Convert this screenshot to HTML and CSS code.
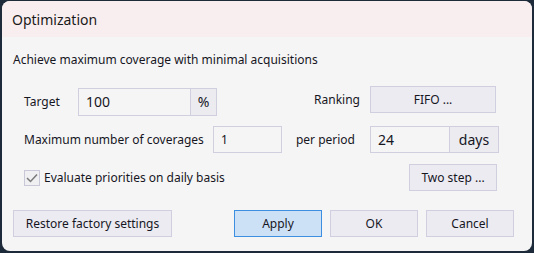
FILE: index.html
```html
<!DOCTYPE html>
<html lang="en">
<head>
    <meta charset="UTF-8">
    <title>Optimization</title>
    <link rel="stylesheet" href="styles.css">
</head>
<body>
    <div class="dialog">
        <div class="title-bar">Optimization</div>
        <div class="content">
            <p class="intro">Achieve maximum coverage with minimal acquisitions</p>

            <div class="row row-target">
                <span class="label label-target">Target</span>
                <div class="field">
                    <span class="input input-target">100</span>
                    <span class="addon addon-pct">%</span>
                </div>
                <span class="label label-right label-ranking">Ranking</span>
                <button class="btn btn-fifo">FIFO ...</button>
            </div>

            <div class="row row-coverages">
                <span class="label label-max">Maximum number of coverages</span>
                <span class="input input-small">1</span>
                <span class="label label-right label-period">per period</span>
                <div class="field">
                    <span class="input input-period">24</span>
                    <span class="addon addon-days">days</span>
                </div>
            </div>

            <div class="row row-check">
                <label class="check">
                    <span class="check-box">
                        <svg width="12" height="10" viewBox="0 0 12 10">
                            <path d="M1 5 L4.5 8.5 L11 1.5" fill="none" stroke="#7a7a7a" stroke-width="1.5"/>
                        </svg>
                    </span>
                    Evaluate priorities on daily basis
                </label>
                <button class="btn btn-two">Two step ...</button>
            </div>

            <div class="row footer">
                <button class="btn btn-restore">Restore factory settings</button>
                <div class="footer-actions">
                    <button class="btn btn-primary">Apply</button>
                    <button class="btn">OK</button>
                    <button class="btn">Cancel</button>
                </div>
            </div>
        </div>
    </div>
</body>
</html>
```

FILE: styles.css
```css
body {
    margin: 0;
    padding: 1px 2px 2px 2px;
    background-color: #1d2a3a;
    font-family: 'Noto Sans', 'Open Sans', sans-serif;
    font-size: 12px;
    color: #16161f;
}
.dialog {
    width: 530px;
    height: 250px;
    background-color: #f5f5f5;
    border-radius: 8px;
    overflow: hidden;
    box-sizing: border-box;
}
.title-bar {
    height: 36px;
    line-height: 37px;
    padding-left: 10px;
    background-color: #f9eeef;
    font-size: 14px;
    color: #1a1a1a;
}
.content {
    padding: 15px 0 0 11px;
}
.intro {
    margin: 0;
    line-height: 16px;
}
.row {
    display: flex;
    align-items: center;
}
.row-target {
    margin-top: 18px;
    height: 30px;
    padding-left: 11px;
}
.row-coverages {
    margin-top: 10px;
    height: 27px;
    padding-left: 11px;
}
.row-check {
    margin-top: 11px;
    height: 27px;
    padding-left: 11px;
}
.footer {
    margin-top: 19px;
    height: 27px;
}
.label-target {
    width: 54px;
}
.label-max {
    width: 189px;
}
.label-right {
    text-align: right;
}
.label-ranking {
    width: 143px;
    margin-right: 10px;
    align-self: flex-start;
    line-height: 27px;
}
.label-period {
    width: 73px;
    margin-right: 15px;
}
.field {
    display: flex;
    align-self: flex-end;
}
.row-coverages .field {
    align-self: center;
}
.input {
    box-sizing: border-box;
    height: 28px;
    line-height: 26px;
    border: 1px solid #cfcfe0;
    background-color: #f5f5f5;
    padding-left: 7px;
    font-size: 14px;
}
.input-target {
    width: 113px;
}
.input-small {
    width: 69px;
    height: 27px;
    line-height: 25px;
    font-size: 12px;
}
.input-period {
    width: 80px;
    height: 27px;
    line-height: 25px;
}
.addon {
    box-sizing: border-box;
    height: 28px;
    line-height: 26px;
    border: 1px solid #cfcfe0;
    border-left: none;
    background-color: #ebebf0;
    text-align: center;
    font-size: 14px;
}
.addon-pct {
    width: 26px;
}
.addon-days {
    width: 49px;
    height: 27px;
    line-height: 25px;
}
.btn {
    box-sizing: border-box;
    height: 27px;
    width: 88px;
    border: 1px solid #cfcfe0;
    background-color: #ecebf2;
    font-family: inherit;
    font-size: 12px;
    color: #16161f;
    padding: 0;
}
.btn-fifo {
    width: 126px;
    align-self: flex-start;
}
.check {
    display: flex;
    align-items: center;
    gap: 4px;
    width: 385px;
}
.check-box {
    box-sizing: border-box;
    width: 16px;
    height: 16px;
    border: 1px solid #c8c8d8;
    background-color: #f0f0f2;
    display: flex;
    align-items: center;
    justify-content: center;
}
.btn-restore {
    width: 159px;
}
.footer-actions {
    display: flex;
    gap: 8px;
    margin-left: 62px;
}
.btn-primary {
    background-color: #cce0f6;
    border-color: #3b8ee0;
}
```
